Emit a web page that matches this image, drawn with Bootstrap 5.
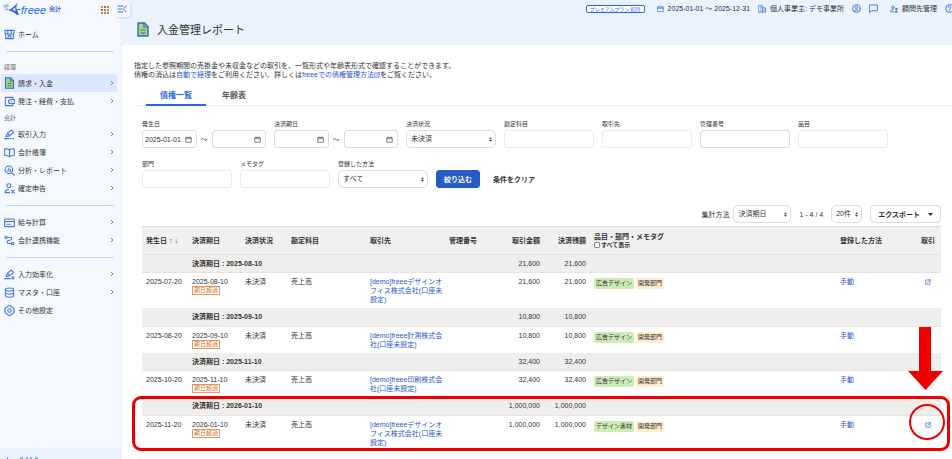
<!DOCTYPE html>
<html lang="ja">
<head>
<meta charset="utf-8">
<meta name="viewport" content="width=device-width, initial-scale=1">
<title>入金管理レポート</title>
<link href="https://cdn.jsdelivr.net/npm/bootstrap@5.3.0/dist/css/bootstrap.min.css" rel="stylesheet">
<style>
:root{--blue:#2864f0;--link:#285ac8;--ink:#323232;--line:#dcdcdc;--red:#ee0000}
body{font-family:"Liberation Sans","Noto Sans CJK JP",sans-serif;font-size:7px;line-height:9px;color:var(--ink);background:#fff}
a{color:var(--link);text-decoration:none}
svg{flex:none;display:block}
.ico{fill:none;stroke:#3f72dc;stroke-width:1.5;stroke-linecap:round;stroke-linejoin:round}
.shell{height:100vh;overflow:hidden}
/* sidebar */
.side{width:122px;flex:none;background:#f5f9ff;border-right:1px solid #e6effc;position:relative}
.brand{height:19px;padding:0 0 0 2px}
.brand .script{font-size:11px;font-style:italic;color:var(--blue);line-height:14px}
.brand .kind{font-size:6px;font-weight:700;color:#4573cc;margin-left:3px}
.apps{margin-left:40px}
.fold{position:absolute;left:116px;top:1px;width:14px;height:16px;background:#f5f9ff;border:0;border-radius:0 3px 3px 0;box-shadow:1px 1px 2px #c8d6ee;padding:0;z-index:2}
.menu{padding:6px 4px 0 1px}
.menu a{color:var(--ink);height:18px;padding:0 3px;gap:3px;border-radius:2px}
.menu a.on{background:#dce8ff}
.menu hr{margin:8px 3px 7px 5px;border-color:#bcd3fa;opacity:1}
.menu .sec{font-size:6px;color:#6e6b70;padding-left:3px;line-height:8px;margin-top:4px;margin-bottom:3px}
.menu .first{margin-top:11px}
.sidefoot{height:11px;background:#ebf3ff;overflow:hidden;padding:9px 0 0 5px}
/* header */
.head{background:#ebf3ff;height:45px}
.top{height:17px;overflow:hidden}
.plan{font-size:5px;line-height:6px;border:1px solid var(--blue);border-radius:2px;color:var(--blue);background:#fff;padding:0 3px}
.head h1{font-size:11px;line-height:14px;margin:0}
.pagetitle{padding:5px 0 0 15px;gap:8px}
.body-pad{padding:16px 11px 0 12px}
/* tabs */
.tabs{border-bottom:1px solid #efefef;margin-right:-11px;padding-left:12px}
.tabs button{font-size:8px;line-height:10px;font-weight:700;border:0;background:none;color:#595959;padding:4px 14px 3px;border-bottom:2px solid transparent;margin-bottom:-1px}
.tabs button.on{color:var(--blue);border-color:var(--blue)}
.tabs button+button{margin-left:2px}
/* filters */
.inner{padding-left:8px}
.filters{gap:12px 8px;padding-top:14px}
.filters label{font-size:6px;line-height:8px;margin-bottom:2px;display:block}
.fld{width:90px}
.rng{width:124px}
.box{height:18px;border:1px solid var(--line);border-radius:3px;background:#fff;min-width:0}
.box.soft{border-color:#ececec}
.box input,.fld>input{font-size:7px;color:var(--ink);min-width:0}
.box input{border:0;padding:0 0 0 2px;width:100%;background:none;outline:0}
.box svg{width:7px;height:7px;fill:none;stroke:#777;stroke-width:1.8}
.fld>input{width:100%;padding:0 4px;display:block}
.pick{appearance:none;height:18px;border:1px solid var(--line);border-radius:5px;font-size:7px;line-height:14px;color:var(--ink);padding:0 10px 0 4px;background:#fff url("data:image/svg+xml,%3Csvg xmlns='http://www.w3.org/2000/svg' viewBox='0 0 4 6'%3E%3Cpath d='M2 0 4 2.5H0zM2 6 0 3.5h4z' fill='%23444'/%3E%3C/svg%3E") no-repeat right 3px center/3px 5px}
.act{font-size:7px;line-height:9px;font-weight:700;height:18px;padding:0 7px;border-radius:3px}
.act-main{background:#285ac8;color:#fff;border:1px solid #285ac8}
.act-plain{border:0;background:none;color:var(--ink);padding:0 5px}
.act-out{border:1px solid var(--line);background:#fff;color:var(--ink);border-radius:4px}
.bar{margin-top:17px;margin-bottom:3px;gap:8px}
/* report table */
.report{table-layout:fixed;width:100%;border-top:1px solid #dcdcdc}
.report th,.report td{padding:4px 0 0 4px;vertical-align:top;font-weight:400}
.report thead th{height:28px;background:#f0f0f0;font-weight:700;vertical-align:middle;padding-top:0;border-bottom:1px solid #e2e2e2;white-space:nowrap}
.report .grp>*{height:18px;background:#efeeed;vertical-align:middle;padding-top:0;border-bottom:1px solid #e6e4e2}
.report .grp th{font-weight:700}
.report tbody td{padding-bottom:4px}
.report tbody .grp td{padding-bottom:0}
.report .num{text-align:right;padding-right:4px}
.report .end{text-align:center;padding:4px 0 0}
.report .end svg{margin:2px auto 0}
.report input{appearance:none;width:6px;height:6px;border:1px solid #888;background:#fff;border-radius:1px;margin:0}
.report thead label{font-size:6px;gap:1px}
.late{display:inline-block;font-size:6px;line-height:7px;height:9px;border:1px solid #e09a60;color:#d6772f;padding:0 1px;vertical-align:top}
.tag{display:inline-block;font-size:6px;line-height:9px;padding:1px 2px;margin-top:1px;border-radius:2px;vertical-align:top}
.tag-g{background:#cdebb5}
.tag-o{background:#ffeccc}
/* callouts over the table */
.ring{position:absolute;left:-10px;right:-9px;bottom:0;height:55px;border:3px solid var(--red);border-radius:9px;pointer-events:none}
.dot{position:absolute;right:-4px;bottom:11px;width:36px;height:36px;border:2px solid var(--red);border-radius:50%;pointer-events:none}
.arrow{position:absolute;right:-2px;bottom:61px;pointer-events:none}
</style>
<script src="https://cdn.jsdelivr.net/npm/bootstrap@5.3.0/dist/js/bootstrap.bundle.min.js"></script>
</head>
<body>
<svg class="d-none" aria-hidden="true">
  <symbol id="chev" viewBox="0 0 4 6"><path d="M1 1l2 2-2 2" fill="none" stroke="#5a8be8" stroke-width="1"/></symbol>
  <symbol id="cal" viewBox="0 0 14 14"><path d="M1.500 3h11v9.500h-11zM1.500 5.500h11M4 1v2M10 1v2"/></symbol>
  <symbol id="doc" viewBox="0 0 12 15"><path d="M1 1h6.500L11 4.500V14H1z" fill="#a6d96c" stroke="#3566c8" stroke-width="1.400" stroke-linejoin="round"/><path d="M7 1v4h4M3.500 8h5M3.500 11h5" fill="none" stroke="#3566c8" stroke-width="1.200"/></symbol>
  <symbol id="ext" viewBox="0 0 12 12"><path d="M5 2H1.500v8.500H10V7M7 1.500h3.500V5M10.500 1.500L5 7"/></symbol>
</svg>
<div class="shell d-flex">
  <aside class="side d-flex flex-column">
    <div class="brand d-flex align-items-center">
      <svg width="19" height="15" viewBox="0 0 19 15"><path d="M1 3l5-1 1 3-5 1zM2 7l4-1 .5 2-3 .5z" fill="#9dbdf5"/><path d="M7 7.500C10 7 12 4 15.500 1c-1 3-1.500 4.500-1 6 .8 2 2 4 2.500 6.500-3.500-1-5-4.500-10-4.800z" fill="#2864f0"/><path d="M10.500 7.400l3-2.500c-.4 1.800-.4 2.800.5 4.600z" fill="#f5f9ff"/><path d="M14 7.600h4.500" stroke="#2864f0" stroke-width="1"/></svg>
      <span class="script">freee</span><span class="kind">会計</span>
      <svg class="apps" width="8" height="8" viewBox="0 0 8 8"><g fill="#e08a3c"><path d="M0 0h2v2H0zM6 3h2v2H6z"/></g><g fill="#d9534a"><path d="M3 0h2v2H3zM0 3h2v2H0z"/></g><g fill="#6aa84f"><path d="M6 0h2v2H6zM3 3h2v2H3zM0 6h2v2H0z"/></g><path d="M3 6h2v2H3zM6 6h2v2H6z" fill="#b08a3c"/></svg>
    </div>
    <button class="fold" type="button" aria-label="メニューを閉じる"><svg width="12" height="10" viewBox="0 0 12 10" class="ico"><path d="M2 2h5M2 5h4M2 8h5M10 2L7.500 5 10 8" stroke-width="1"/></svg></button>
    <nav class="menu flex-grow-1">
      <a href="#" class="d-flex align-items-center"><svg class="ico" width="11" height="11" viewBox="0 0 16 16"><path d="M2.500 7v7h11V7M1.500 2h13v3.500a2 2 0 0 1-4 0 2 2 0 0 1-5 0 2 2 0 0 1-4 0zM5.500 2v3.500M10.500 2v3.500M6 14v-4h4v4"/></svg><span>ホーム</span></a>
      <hr>
      <div class="sec first">経理</div>
      <a href="#" class="on d-flex align-items-center"><svg width="11" height="12" viewBox="0 0 12 15"><use href="#doc"/></svg><span>請求・入金</span><svg class="ms-auto" width="4" height="6"><use href="#chev"/></svg></a>
      <a href="#" class="d-flex align-items-center"><svg class="ico" width="11" height="11" viewBox="0 0 16 16"><path d="M13 5V2H2v12h11v-3M15 5H9.500a3 3 0 0 0 0 6H15zM10 8h.5"/></svg><span>発注・経費・支払</span><svg class="ms-auto" width="4" height="6"><use href="#chev"/></svg></a>
      <div class="sec">会計</div>
      <a href="#" class="d-flex align-items-center"><svg class="ico" width="11" height="11" viewBox="0 0 16 16"><path d="M3 11l2-5 6-4.500 3 3.500-6 5zM5.500 6.500l3 3M1 14h6M9.500 14h1M13 14h1"/></svg><span>取引入力</span><svg class="ms-auto" width="4" height="6"><use href="#chev"/></svg></a>
      <a href="#" class="d-flex align-items-center"><svg class="ico" width="11" height="11" viewBox="0 0 16 16"><path d="M8 4C6 2.500 4 2.500 1 2.500v10c3 0 5 0 7 1.500 2-1.500 4-1.500 7-1.500v-10c-3 0-5 0-7 1.500zM8 4v10"/></svg><span>会計帳簿</span><svg class="ms-auto" width="4" height="6"><use href="#chev"/></svg></a>
      <a href="#" class="d-flex align-items-center"><svg class="ico" width="11" height="11" viewBox="0 0 16 16"><circle cx="7" cy="7" r="5.500"/><path d="M11 11l4 4M4.500 9V7.500M7 9V4.500M9.500 9V6.500"/></svg><span>分析・レポート</span><svg class="ms-auto" width="4" height="6"><use href="#chev"/></svg></a>
      <a href="#" class="d-flex align-items-center"><svg class="ico" width="11" height="11" viewBox="0 0 16 16"><circle cx="7" cy="4" r="2.800"/><path d="M8 14H1.500c0-3 2-4.500 5-4.500M11 10.500l4 4M15 10.500l-4 4M11 10.500h.1M15 14.500h.1"/></svg><span>確定申告</span><svg class="ms-auto" width="4" height="6"><use href="#chev"/></svg></a>
      <hr>
      <a href="#" class="d-flex align-items-center"><svg class="ico" width="11" height="11" viewBox="0 0 16 16"><rect x="1" y="3" width="14" height="11" rx="1"/><path d="M1 6.500h14M4 10.500h5"/></svg><span>給与計算</span><svg class="ms-auto" width="4" height="6"><use href="#chev"/></svg></a>
      <a href="#" class="d-flex align-items-center"><svg class="ico" width="11" height="11" viewBox="0 0 16 16"><circle cx="3" cy="3.500" r="1.600"/><circle cx="12.500" cy="12.500" r="1.800"/><path d="M5 3.500h4c3 0 3 3.500 0 4H7c-3 .5-3 5 0 5h3.500"/></svg><span>会計連携機能</span><svg class="ms-auto" width="4" height="6"><use href="#chev"/></svg></a>
      <hr>
      <a href="#" class="d-flex align-items-center"><svg class="ico" width="11" height="11" viewBox="0 0 16 16"><path d="M3 11l2-5 6-4.500 3 3.500-6 5zM5.500 6.500l3 3M1 14h8"/><circle cx="13" cy="13" r="1.600"/></svg><span>入力効率化</span><svg class="ms-auto" width="4" height="6"><use href="#chev"/></svg></a>
      <a href="#" class="d-flex align-items-center"><svg class="ico" width="11" height="11" viewBox="0 0 16 16"><ellipse cx="8" cy="3.500" rx="6" ry="2.200"/><path d="M2 3.500v9c0 3 12 3 12 0v-9M2 8c0 3 12 3 12 0"/></svg><span>マスタ・口座</span><svg class="ms-auto" width="4" height="6"><use href="#chev"/></svg></a>
      <a href="#" class="d-flex align-items-center"><svg class="ico" width="11" height="11" viewBox="0 0 16 16"><path d="M6 1h4l.8 2 2.200.3 2 3.400L13.700 8 15 9.300l-2 3.400-2.200.3-.8 2H6l-.8-2-2.200-.3-2-3.400L2.300 8 1 6.700l2-3.400L5.200 3z"/><circle cx="8" cy="8" r="2.500"/></svg><span>その他設定</span></a>
    </nav>
    <div class="sidefoot"><svg width="34" height="8" viewBox="0 0 34 8"><path d="M0 4L3 0v8z" fill="#2864f0"/><path d="M15 1h3M21 1h2M25 1h2M30 1h3" stroke="#2864f0" stroke-width="1"/></svg></div>
  </aside>

  <main class="flex-grow-1 min-w-0">
    <header class="head">
      <div class="top d-flex align-items-center justify-content-end gap-2">
        <span class="plan me-1">プレミアムプラン:招待</span>
        <a href="#" class="d-flex align-items-center gap-1 text-reset"><svg class="ico" width="7" height="8" viewBox="0 0 14 14"><use href="#cal"/></svg>2025-01-01 〜 2025-12-31</a>
        <a href="#" class="d-flex align-items-center gap-1 text-reset"><svg class="ico" width="8" height="8" viewBox="0 0 14 14"><path d="M1 1.500h6.500v11H1zM7.500 5H13v7.500H7.500M4 4.500v.1M4 7v.1M4 9.500v.1M10.500 8v2"/></svg>個人事業主: デモ事業所</a>
        <a href="#" aria-label="アカウント"><svg class="ico" width="9" height="9" viewBox="0 0 14 14"><circle cx="7" cy="7" r="6"/><circle cx="7" cy="5.500" r="1.800"/><path d="M3.500 11c1.500-2.500 5.500-2.500 7 0"/></svg></a>
        <a href="#" class="me-1" aria-label="メッセージ"><svg class="ico" width="9" height="9" viewBox="0 0 14 14"><path d="M1 1.500h12v9H4L1 13z"/></svg></a>
        <a href="#" class="d-flex align-items-center gap-1 text-reset"><svg class="ico" width="8" height="8" viewBox="0 0 14 14"><circle cx="5" cy="4" r="2.200"/><path d="M7 12H1c0-3 1.500-4 4-4"/><circle cx="11" cy="7" r="1.300" fill="#285ac8"/><path d="M9 12c0-2 4-2 4 0z" fill="#285ac8"/></svg>顧問先管理</a>
        <a href="#" aria-label="ヘルプ"><svg class="ico" width="7" height="9" viewBox="0 0 14 14" preserveAspectRatio="xMinYMin slice"><circle cx="7" cy="7" r="6"/><path d="M5 5.500c0-3 4-2.500 4 0C9 7 7 7 7 8.500M7 10.500v.1"/></svg></a>
      </div>
      <div class="pagetitle d-flex align-items-center">
        <svg width="12" height="15"><use href="#doc"/></svg>
        <h1 class="fw-normal">入金管理レポート</h1>
      </div>
    </header>
    <div class="body-pad">
      <div>指定した参照期間の売掛金や未収金などの取引を、一覧形式や年齢表形式で確認することができます。</div>
      <div class="d-flex">債権の消込は<a href="#">自動で経理</a>をご利用ください。詳しくは<a href="#" class="d-flex align-items-center">freeeでの債権管理方法<svg class="ico" width="6" height="6"><use href="#ext"/></svg></a>をご覧ください。</div>
      <div class="tabs d-flex mt-2" role="tablist"><button type="button" class="on" role="tab" aria-selected="true">債権一覧</button><button type="button" role="tab">年齢表</button></div>

      <div class="inner">
        <form class="filters d-flex flex-wrap align-items-end">
          <div class="rng"><label for="f1">発生日</label>
            <div class="d-flex align-items-center">
              <div class="box d-flex align-items-center flex-fill pe-1"><input id="f1" type="text" value="2025-01-01"><svg viewBox="0 0 14 14"><use href="#cal"/></svg></div>
              <span class="px-1 flex-shrink-0">〜</span>
              <div class="box d-flex align-items-center flex-fill pe-1"><input type="text" aria-label="発生日 終了"><svg viewBox="0 0 14 14"><use href="#cal"/></svg></div>
            </div></div>
          <div class="rng"><label for="f2">決済期日</label>
            <div class="d-flex align-items-center">
              <div class="box d-flex align-items-center flex-fill pe-1"><input id="f2" type="text"><svg viewBox="0 0 14 14"><use href="#cal"/></svg></div>
              <span class="px-1 flex-shrink-0">〜</span>
              <div class="box d-flex align-items-center flex-fill pe-1"><input type="text" aria-label="決済期日 終了"><svg viewBox="0 0 14 14"><use href="#cal"/></svg></div>
            </div></div>
          <div class="fld"><label for="f3">決済状況</label><select id="f3" class="pick w-100"><option>未決済</option></select></div>
          <div class="fld"><label for="f4">勘定科目</label><input id="f4" class="box soft" type="text"></div>
          <div class="fld"><label for="f5">取引先</label><input id="f5" class="box soft" type="text"></div>
          <div class="fld"><label for="f6">管理番号</label><input id="f6" class="box" type="text"></div>
          <div class="fld"><label for="f7">品目</label><input id="f7" class="box soft" type="text"></div>
          <div class="fld"><label for="f8">部門</label><input id="f8" class="box soft" type="text"></div>
          <div class="fld"><label for="f9">メモタグ</label><input id="f9" class="box soft" type="text"></div>
          <div class="fld"><label for="f10">登録した方法</label><select id="f10" class="pick w-100"><option>すべて</option></select></div>
          <button type="submit" class="act act-main">絞り込む</button>
          <button type="reset" class="act act-plain">条件をクリア</button>
        </form>

        <div class="bar d-flex align-items-center justify-content-end">
          <div class="d-flex align-items-center gap-1"><label for="s1">集計方法</label><select id="s1" class="pick pe-4"><option>決済期日</option></select></div>
          <span>1 - 4 / 4</span>
          <select class="pick" aria-label="表示件数"><option>20件</option></select>
          <button type="button" class="act act-out d-flex align-items-center gap-2">エクスポート<svg width="5" height="3" viewBox="0 0 5 3"><path d="M0 0h5L2.500 3z" fill="#323232"/></svg></button>
        </div>

        <div class="position-relative">
          <table class="report">
            <colgroup><col style="width:46px"><col style="width:53px"><col style="width:46px"><col style="width:79px"><col style="width:79px"><col style="width:54px"><col style="width:45px"><col style="width:46px"><col><col style="width:79px"><col style="width:26px"></colgroup>
            <thead><tr><th>発生日 ↑ ↓</th><th>決済期日</th><th>決済状況</th><th>勘定科目</th><th>取引先</th><th>管理番号</th><th class="num">取引金額</th><th class="num">決済残額</th><th>品目・部門・メモタグ<label class="d-flex align-items-center"><input type="checkbox">すべて表示</label></th><th>登録した方法</th><th class="end pt-0">取引</th></tr></thead>
            <tbody>
              <tr class="grp"><td></td><th colspan="5">決済期日 : 2025-08-10</th><td class="num">21,600</td><td class="num">21,600</td><td colspan="3"></td></tr>
              <tr><td>2025-07-20</td><td>2025-08-10<br><span class="late">期日超過</span></td><td>未決済</td><td>売上高</td><td><a href="#">[demo]freeeデザインオフィス株式会社(口座未設定)</a></td><td></td><td class="num">21,600</td><td class="num">21,600</td><td><span class="tag tag-g">広告デザイン</span> <span class="tag tag-o">開発部門</span></td><td><a href="#">手動</a></td><td class="end"><a href="#" aria-label="取引を開く"><svg class="ico" width="6" height="6"><use href="#ext"/></svg></a></td></tr>
              <tr class="grp"><td></td><th colspan="5">決済期日 : 2025-09-10</th><td class="num">10,800</td><td class="num">10,800</td><td colspan="3"></td></tr>
              <tr><td>2025-08-20</td><td>2025-09-10<br><span class="late">期日超過</span></td><td>未決済</td><td>売上高</td><td><a href="#">[demo]freee計測株式会社(口座未設定)</a></td><td></td><td class="num">10,800</td><td class="num">10,800</td><td><span class="tag tag-g">広告デザイン</span> <span class="tag tag-o">開発部門</span></td><td><a href="#">手動</a></td><td></td></tr>
              <tr class="grp"><td></td><th colspan="5">決済期日 : 2025-11-10</th><td class="num">32,400</td><td class="num">32,400</td><td colspan="3"></td></tr>
              <tr><td>2025-10-20</td><td>2025-11-10<br><span class="late">期日超過</span></td><td>未決済</td><td>売上高</td><td><a href="#">[demo]freee印刷株式会社(口座未設定)</a></td><td></td><td class="num">32,400</td><td class="num">32,400</td><td><span class="tag tag-g">広告デザイン</span> <span class="tag tag-o">開発部門</span></td><td><a href="#">手動</a></td><td></td></tr>
              <tr class="grp"><td></td><th colspan="5">決済期日 : 2026-01-10</th><td class="num">1,000,000</td><td class="num">1,000,000</td><td colspan="3"></td></tr>
              <tr><td>2025-11-20</td><td>2026-01-10<br><span class="late">期日超過</span></td><td>未決済</td><td>売上高</td><td><a href="#">[demo]freeeデザインオフィス株式会社(口座未設定)</a></td><td></td><td class="num">1,000,000</td><td class="num">1,000,000</td><td><span class="tag tag-g">デザイン素材</span> <span class="tag tag-o">開発部門</span></td><td><a href="#">手動</a></td><td class="end"><a href="#" aria-label="取引を開く"><svg class="ico" width="6" height="6"><use href="#ext"/></svg></a></td></tr>
            </tbody>
          </table>
          <div class="ring"></div>
          <div class="dot"></div>
          <svg class="arrow" width="35" height="63" viewBox="0 0 35 63"><path d="M11 0h12v44h12L17.500 63 0 44h11z" fill="#e00"/></svg>
        </div>
      </div>
    </div>
  </main>
</div>
</body>
</html>
